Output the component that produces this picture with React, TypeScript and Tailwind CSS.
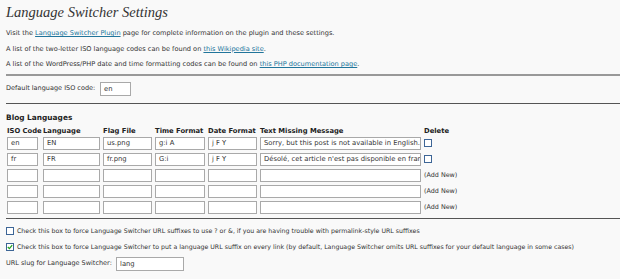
import React from "react";

const sans = "font-['DejaVu_Sans',Verdana,sans-serif]";

type Row = { iso: string; lang: string; flag: string; time: string; date: string; msg: string; existing: boolean };

const rows: Row[] = [
  { iso: "en", lang: "EN", flag: "us.png", time: "g:i A", date: "j F Y", msg: "Sorry, but this post is not available in English.", existing: true },
  { iso: "fr", lang: "FR", flag: "fr.png", time: "G:i", date: "j F Y", msg: "Désolé, cet article n'est pas disponible en français.", existing: true },
  { iso: "", lang: "", flag: "", time: "", date: "", msg: "", existing: false },
  { iso: "", lang: "", flag: "", time: "", date: "", msg: "", existing: false },
  { iso: "", lang: "", flag: "", time: "", date: "", msg: "", existing: false },
];

function Field({ value, className = "" }: { value: string; className?: string }) {
  return (
    <div
      className={`h-[13px] border border-[#a9a9a9] bg-white pl-[3px] text-[6.8px] leading-[11px] text-[#333] whitespace-nowrap overflow-hidden ${className}`}
    >
      {value}
    </div>
  );
}

function Check({ checked = false }: { checked?: boolean }) {
  return (
    <span className="inline-flex w-[8px] h-[8px] border border-[#3d6596] bg-white items-center justify-center shrink-0">
      {checked && (
        <svg viewBox="0 0 6 6" className="w-[6px] h-[6px]">
          <path d="M0.8 3 L2.4 4.6 L5.2 1.2" stroke="#21a121" strokeWidth="1.3" fill="none" />
        </svg>
      )}
    </span>
  );
}

export default function App() {
  return (
    <div className={`w-[620px] h-[279px] bg-[#f9f9f9] text-[#333] ${sans} text-[6.5px] overflow-hidden`}>
      {/* Title */}
      <h2 className="pl-[6px] pt-[2px] h-[22px] leading-[20px] font-['Liberation_Serif',Georgia,serif] italic text-[14.5px] text-[#333]">
        Language Switcher Settings
      </h2>

      {/* Intro */}
      <div className="pl-[6px] pt-[4px] text-[6.6px]">
        <p className="h-[15.5px] leading-[15px]">
          Visit the <a className="text-[#21759b] underline">Language Switcher Plugin</a> page for complete information on the plugin and these settings.
        </p>
        <p className="h-[15.5px] leading-[15px]">
          A list of the two-letter ISO language codes can be found on <a className="text-[#21759b] underline">this Wikipedia site</a>.
        </p>
        <p className="h-[15.5px] leading-[15px]">
          A list of the WordPress/PHP date and time formatting codes can be found on <a className="text-[#21759b] underline">this PHP documentation page</a>.
        </p>
      </div>

      <div className="ml-[6px] mt-[1.5px] h-[2px] bg-[#999]" />

      {/* Default code */}
      <div className="pl-[6px] mt-[6px] flex items-center h-[14px]">
        <span className="w-[94px] whitespace-nowrap">Default language ISO code:</span>
        <Field value="en" className="w-[31px] h-[14px] leading-[12px]" />
      </div>

      <div className="ml-[6px] mt-[7px] h-[1px] bg-[#555]" />

      {/* Blog languages */}
      <h3 className="pl-[6px] mt-[9px] h-[10px] leading-[10px] font-bold text-[7.4px] text-[#222]">Blog Languages</h3>

      <div className="pl-[7px] mt-[4px] grid grid-cols-[33px_57px_49px_50px_49px_161px_auto] gap-x-[3px] gap-y-[3px] items-center">
        {["ISO Code", "Language", "Flag File", "Time Format", "Date Format", "Text Missing Message", "Delete"].map((h) => (
          <div key={h} className="h-[8px] leading-[8px] font-bold text-[6.8px] text-[#222] whitespace-nowrap -mb-[1.5px]">
            {h}
          </div>
        ))}
        {rows.map((r, i) => (
          <React.Fragment key={i}>
            <Field value={r.iso} className="w-[31px]" />
            <Field value={r.lang} />
            <Field value={r.flag} />
            <Field value={r.time} />
            <Field value={r.date} />
            <Field value={r.msg} />
            <div className="flex items-center h-[13px]">
              {r.existing ? <Check /> : <span className="leading-[13px] text-[6.4px]">(Add New)</span>}
            </div>
          </React.Fragment>
        ))}
      </div>

      <div className="ml-[6px] mt-[4px] h-[1px] bg-[#555]" />

      {/* Options */}
      <div className="pl-[6px] mt-[7px] flex items-center gap-[3px] h-[10px] text-[6.25px] whitespace-nowrap">
        <Check />
        <span>Check this box to force Language Switcher URL suffixes to use ? or &amp;, if you are having trouble with permalink-style URL suffixes</span>
      </div>
      <div className="pl-[6px] mt-[6px] flex items-center gap-[3px] h-[10px] text-[6.25px] whitespace-nowrap">
        <Check checked />
        <span>
          Check this box to force Language Switcher to put a language URL suffix on every link (by default, Language Switcher omits URL suffixes for your default language in some cases)
        </span>
      </div>
      <div className="pl-[6px] mt-[5px] flex items-center h-[14px]">
        <span className="w-[110px] whitespace-nowrap">URL slug for Language Switcher:</span>
        <Field value="lang" className="w-[68px] h-[14px] leading-[12px]" />
      </div>
    </div>
  );
}
